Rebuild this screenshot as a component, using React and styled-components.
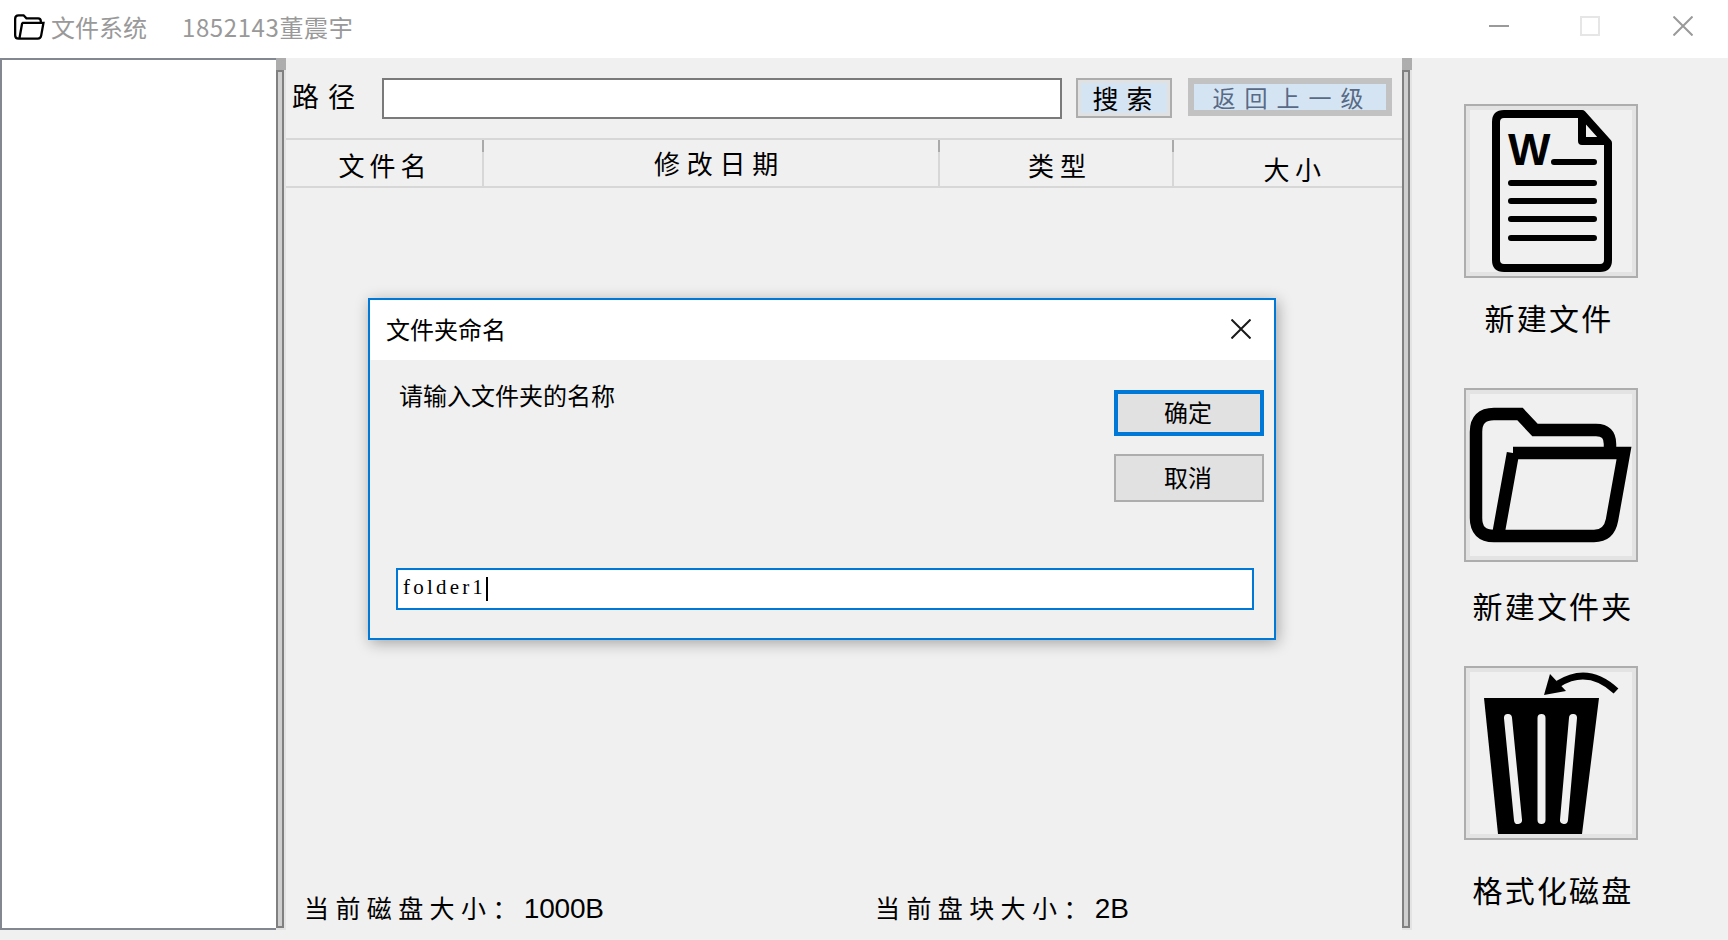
import React from 'react';
import styled, { createGlobalStyle } from 'styled-components';

const Global = createGlobalStyle`
  html, body { margin: 0; padding: 0; width: 1728px; height: 940px; overflow: hidden; background: #f0f0f0; }
  * { box-sizing: border-box; }
  body { font-family: "Noto Sans CJK SC", "Liberation Sans", sans-serif; color: #000; }
`;

const cjk = `"Noto Sans CJK SC", sans-serif`;

const Page = styled.div`
  position: relative;
  width: 1728px;
  height: 940px;
  display: flex;
  flex-direction: column;
  background: #f0f0f0;
`;

const TitleBar = styled.header`
  height: 58px;
  flex: none;
  background: #fff;
  display: flex;
  align-items: center;
  padding: 0 0 4px 14px;
`;

const AppName = styled.span`
  font-size: 24px;
  line-height: 32px;
  color: #999;
  margin-left: ${p => p.$gap}px;
  letter-spacing: ${p => p.$spacing}px;
  font-family: ${cjk};
`;

const WindowControls = styled.div`
  margin-left: auto;
  display: flex;
  align-items: center;
  padding: 0 35px 2px 0;
`;

const ControlSlot = styled.span`
  display: flex;
  margin-left: ${p => p.$gap}px;
`;

const Body = styled.div`
  flex: 1;
  display: flex;
  min-height: 0;
`;

const Tree = styled.aside`
  width: 276px;
  height: 872px;
  background: #fff;
  border-top: 2px solid #828790;
  border-left: 2px solid #828790;
  border-bottom: 2px solid #828790;
`;

const Splitter = styled.div`
  width: 10px;
  height: 872px;
  flex: none;
  display: flex;
  flex-direction: column;
  background: #e3e3e3;
`;

const SplitterHandle = styled.div`
  height: 12px;
  flex: none;
  background: #adadad;
`;

const SplitterTrack = styled.div`
  flex: 1;
  width: 8px;
  margin-bottom: 2px;
  background: #cfcfcf;
  border: 2px solid #808080;
`;

const Main = styled.main`
  width: 1116px;
  flex: none;
  display: flex;
  flex-direction: column;
`;

const Toolbar = styled.div`
  height: 80px;
  flex: none;
  display: flex;
  align-items: flex-start;
  padding: 20px 0 0 6px;
`;

const PathLabel = styled.span`
  width: 90px;
  font-size: 27px;
  line-height: 32px;
  letter-spacing: 9px;
  margin-top: 2px;
  font-family: ${cjk};
`;

const PathInput = styled.div`
  width: 680px;
  height: 41px;
  background: #fff;
  border: 2px solid #7a7a7a;
`;

const ToolButton = styled.button`
  font-family: ${cjk};
  height: ${p => p.$height}px;
  width: ${p => p.$width}px;
  margin-left: ${p => p.$gap}px;
  padding: 0 0 0 ${p => p.$inset}px;
  background: #d5e4f2;
  border: 2px solid ${p => (p.$muted ? '#c2c2c2' : '#adadad')};
  box-shadow: inset 0 0 0 ${p => (p.$muted ? 4 : 3)}px ${p => (p.$muted ? '#c2c2c2' : '#e1e1e1')};
  color: ${p => (p.$muted ? '#586a85' : '#000')};
  font-size: ${p => (p.$muted ? 23 : 26)}px;
  letter-spacing: ${p => p.$spacing}px;
  line-height: 1;
  display: flex;
  align-items: center;
  justify-content: center;
`;

const HeaderRow = styled.div`
  height: 50px;
  flex: none;
  display: flex;
  border-top: 2px solid #d7d7d7;
  border-bottom: 2px solid #d7d7d7;
`;

const HeaderCell = styled.div`
  position: relative;
  width: ${p => p.$width}px;
  flex: none;
  display: flex;
  justify-content: center;
  align-items: center;
  padding-top: ${p => p.$drop}px;
  padding-left: ${p => p.$nudge}px;
  font-size: 26px;
  line-height: 32px;
  letter-spacing: ${p => p.$spacing}px;
  border-right: ${p => (p.$last ? 'none' : '2px solid #d7d7d7')};
  &::after {
    content: '';
    display: ${p => (p.$last ? 'none' : 'block')};
    position: absolute;
    top: 0;
    right: -2px;
    width: 2px;
    height: 12px;
    background: #aaa;
  }
`;

const Listing = styled.div`
  flex: 1;
`;

const StatusBar = styled.div`
  height: 66px;
  flex: none;
  display: flex;
  align-items: flex-start;
  padding: 16px 0 0 18px;
`;

const StatusItem = styled.div`
  width: ${p => p.$width}px;
  flex: none;
  font-size: 25px;
  line-height: 34px;
  letter-spacing: 6.4px;
  white-space: nowrap;
`;

const StatusValue = styled.span`
  font-family: "Liberation Sans", sans-serif;
  font-size: 28px;
  letter-spacing: -0.2px;
`;

const Side = styled.aside`
  flex: 1;
  display: flex;
  flex-direction: column;
  padding: 46px 0 0 52px;
`;

const SideItem = styled.div`
  height: ${p => p.$height}px;
  width: 174px;
  flex: none;
`;

const IconFrame = styled.div`
  width: 174px;
  height: 174px;
  background: #f0f0f0;
  border: 2px solid #adadad;
  box-shadow: inset 0 0 0 4px #e3e3e3;
`;

const FrameArt = styled.svg`
  display: block;
  width: 170px;
  height: 170px;
`;

const SideLabel = styled.div`
  margin-top: ${p => p.$gap}px;
  padding-left: ${p => p.$left}px;
  padding-right: ${p => p.$right}px;
  font-size: 30px;
  line-height: 40px;
  letter-spacing: 2.2px;
  text-align: center;
  white-space: nowrap;
`;

const Dialog = styled.section`
  position: absolute;
  left: 368px;
  top: 298px;
  width: 908px;
  height: 342px;
  display: flex;
  flex-direction: column;
  background: #f0f0f0;
  border: 2px solid #0078d7;
  box-shadow: 2px 3px 14px rgba(0, 0, 0, 0.32);
`;

const DialogTitleBar = styled.div`
  height: 60px;
  flex: none;
  background: #fff;
  display: flex;
  align-items: center;
  justify-content: space-between;
  padding: 0 23px 3px 16px;
`;

const DialogTitle = styled.span`
  font-size: 24px;
  line-height: 32px;
`;

const DialogRow = styled.div`
  height: 208px;
  flex: none;
  display: flex;
  justify-content: space-between;
  align-items: flex-start;
  padding: 19px 10px 0 29px;
`;

const Prompt = styled.p`
  margin: 0;
  font-size: 24px;
  line-height: 32px;
`;

const DialogButtons = styled.div`
  width: 150px;
  margin-top: 11px;
  display: flex;
  flex-direction: column;
  gap: 18px;
`;

const DialogButton = styled.button`
  font-family: ${cjk};
  width: 150px;
  height: ${p => (p.$primary ? 46 : 48)}px;
  padding: 0 2px 2px 0;
  background: #e1e1e1;
  border: ${p => (p.$primary ? '4px solid #0078d7' : '2px solid #adadad')};
  font-size: 24px;
  line-height: 1;
  color: #000;
`;

const NameField = styled.div`
  width: 858px;
  height: 42px;
  margin-left: 26px;
  background: #fff;
  border: 2px solid #0078d7;
  display: flex;
  align-items: center;
  padding: 0 0 1px 5px;
`;

const NameText = styled.span`
  font-family: "Liberation Serif", serif;
  font-size: 21px;
  letter-spacing: 3.2px;
  line-height: 24px;
  margin-top: -3px;
`;

const Caret = styled.span`
  width: 2px;
  height: 24px;
  background: #000;
`;

function MinimizeIcon() {
  return (
    <svg width="20" height="20" viewBox="0 0 20 20" fill="none">
      <path d="M0 10h20" stroke="#9a9a9a" strokeWidth="2" />
    </svg>
  );
}

function MaximizeIcon() {
  return (
    <svg width="20" height="20" viewBox="0 0 20 20" fill="none">
      <rect x="1" y="1" width="18" height="18" stroke="#e6e6e6" strokeWidth="2" />
    </svg>
  );
}

function CloseIcon({ color, width }) {
  return (
    <svg width="20" height="20" viewBox="0 0 20 20" fill="none">
      <path d="M0.5 0.5l19 19M19.5 0.5l-19 19" stroke={color} strokeWidth={width} />
    </svg>
  );
}

const folderPath =
  'M47 63H158L146 130Q143 146 128 146H28Q10 146 10 128V42Q10 24 28 24H54L69 40H130Q144 40 144 54V63M47 63L32 146';

function SmallFolder() {
  return (
    <svg width="31" height="26" viewBox="4 18 162 134" fill="none">
      <path d={folderPath} stroke="#000" strokeWidth="12" />
    </svg>
  );
}

function DocumentArt() {
  return (
    <FrameArt viewBox="0 0 170 170" fill="none">
      <path
        d="M38 8H116L142 37V154Q142 162 134 162H38Q30 162 30 154V16Q30 8 38 8Z"
        stroke="#000"
        strokeWidth="8"
        strokeLinejoin="round"
      />
      <path d="M116 8V35H142" stroke="#000" strokeWidth="8" strokeLinejoin="round" />
      <text x="42" y="59" fontFamily="Liberation Sans, sans-serif" fontWeight="700" fontSize="45" fill="#000">W</text>
      <path
        d="M88 56H128M45 77H128M45 95H128M45 113H128M45 132H128"
        stroke="#000"
        strokeWidth="6"
        strokeLinecap="round"
      />
    </FrameArt>
  );
}

function FolderArt() {
  return (
    <FrameArt viewBox="0 0 170 170" fill="none">
      <path d={folderPath} stroke="#000" strokeWidth="12.5" />
    </FrameArt>
  );
}

function TrashArt() {
  return (
    <FrameArt viewBox="0 0 170 170" fill="none">
      <path d="M18 30H133L116 166H32Z" fill="#000" />
      <path
        d="M42 50L52 152M75.5 50V152M107 50L98 152"
        stroke="#f0f0f0"
        strokeWidth="8"
        strokeLinecap="round"
      />
      <path d="M150 23Q122 -3 92 16" stroke="#000" strokeWidth="7" />
      <path d="M78 27L84 6L100 23Z" fill="#000" />
    </FrameArt>
  );
}

function SplitBar() {
  return (
    <Splitter>
      <SplitterHandle />
      <SplitterTrack />
    </Splitter>
  );
}

export default function App() {
  return (
    <Page>
      <Global />
      <TitleBar>
        <SmallFolder />
        <AppName $gap={6} $spacing={0}>文件系统</AppName>
        <AppName $gap={35} $spacing={0.6}>1852143董震宇</AppName>
        <WindowControls>
          <MinimizeIcon />
          <ControlSlot $gap={71}><MaximizeIcon /></ControlSlot>
          <ControlSlot $gap={73}><CloseIcon color="#9a9a9a" width="2" /></ControlSlot>
        </WindowControls>
      </TitleBar>
      <Body>
        <Tree />
        <SplitBar />
        <Main>
          <Toolbar>
            <PathLabel>路径</PathLabel>
            <PathInput />
            <ToolButton $width={96} $height={40} $gap={14} $spacing={8} $inset={5}>搜索</ToolButton>
            <ToolButton $width={204} $height={38} $gap={16} $spacing={9} $inset={5} $muted>返回上一级</ToolButton>
          </Toolbar>
          <HeaderRow>
            <HeaderCell $width={198} $spacing={5} $drop={4} $nudge={2}>文件名</HeaderCell>
            <HeaderCell $width={456} $spacing={6.7} $drop={0} $nudge={17}>修改日期</HeaderCell>
            <HeaderCell $width={234} $spacing={6} $drop={4} $nudge={8}>类型</HeaderCell>
            <HeaderCell $width={228} $spacing={5.5} $drop={12} $nudge={14} $last>大小</HeaderCell>
          </HeaderRow>
          <Listing />
          <StatusBar>
            <StatusItem $width={571}>当前磁盘大小：<StatusValue>1000B</StatusValue></StatusItem>
            <StatusItem $width={300}>当前盘块大小：<StatusValue>2B</StatusValue></StatusItem>
          </StatusBar>
        </Main>
        <SplitBar />
        <Side>
          <SideItem $height={284}>
            <IconFrame><DocumentArt /></IconFrame>
            <SideLabel $gap={19} $left={0} $right={4}>新建文件</SideLabel>
          </SideItem>
          <SideItem $height={278}>
            <IconFrame><FolderArt /></IconFrame>
            <SideLabel $gap={23} $left={4} $right={0}>新建文件夹</SideLabel>
          </SideItem>
          <SideItem $height={274}>
            <IconFrame><TrashArt /></IconFrame>
            <SideLabel $gap={29} $left={4} $right={0}>格式化磁盘</SideLabel>
          </SideItem>
        </Side>
      </Body>
      <Dialog>
        <DialogTitleBar>
          <DialogTitle>文件夹命名</DialogTitle>
          <CloseIcon color="#1a1a1a" width="2" />
        </DialogTitleBar>
        <DialogRow>
          <Prompt>请输入文件夹的名称</Prompt>
          <DialogButtons>
            <DialogButton $primary>确定</DialogButton>
            <DialogButton>取消</DialogButton>
          </DialogButtons>
        </DialogRow>
        <NameField>
          <NameText>folder1</NameText>
          <Caret />
        </NameField>
      </Dialog>
    </Page>
  );
}
